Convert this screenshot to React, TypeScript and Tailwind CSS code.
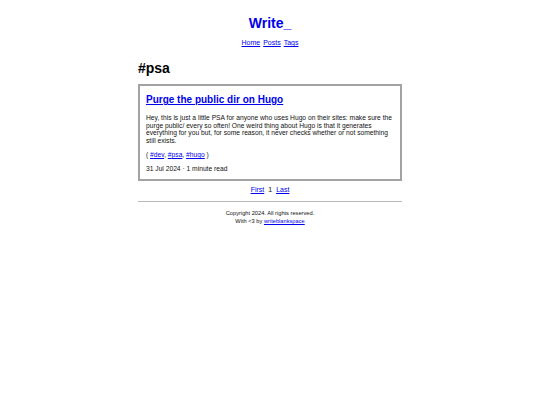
import React from "react";

const tags = ["dev", "psa", "hugo"];

export default function App() {
  return (
    <div className="min-h-[405px] bg-white text-[#111] font-['Liberation_Sans',Arial,sans-serif]">
      <div className="mx-auto w-[264px] pt-[11px]">
        <header className="text-center">
          <a href="#" className="text-[14px] font-bold leading-[20px] text-[#0000ee] no-underline">
            Write_
          </a>
          <nav className="mt-[3px] flex justify-center gap-[3px] text-[7px] leading-[10px]">
            <a href="#" className="text-[#0000ee] underline">Home</a>
            <a href="#" className="text-[#0000ee] underline">Posts</a>
            <a href="#" className="text-[#0000ee] underline">Tags</a>
          </nav>
        </header>

        <h1 className="mt-[11px] text-[14px] font-bold leading-[18px] text-black">#psa</h1>

        <article className="mt-[7px] border-2 border-[#a3a3a3] px-[6px] pt-[6px] pb-[6px]">
          <h2 className="text-[10px] font-bold leading-[16px]">
            <a href="#" className="text-[#0000ee] underline">Purge the public dir on Hugo</a>
          </h2>
          <p className="mt-[6px] text-[6.7px] leading-[7.6px]">
            Hey, this is just a little PSA for anyone who uses Hugo on their sites: make sure the
            purge public/ every so often! One weird thing about Hugo is that it generates
            everything for you but, for some reason, it never checks whether or not something
            still exists.
          </p>
          <p className="mt-[7px] text-[6.7px] leading-[8px]">
            ({" "}
            {tags.map((t, i) => (
              <React.Fragment key={t}>
                <a href="#" className="text-[#0000ee] underline">#{t}</a>
                {i < tags.length - 1 ? ", " : " "}
              </React.Fragment>
            ))}
            )
          </p>
          <p className="mt-[6px] text-[6.7px] leading-[8px]">31 Jul 2024 · 1 minute read</p>
        </article>

        <div className="mt-[4px] flex justify-center gap-[4px] text-[7px] leading-[10px]">
          <a href="#" className="text-[#0000ee] underline">First</a>
          <span>1</span>
          <a href="#" className="text-[#0000ee] underline">Last</a>
        </div>

        <hr className="mt-[6px] border-t border-[#b8b8b8]" />

        <footer className="mt-[7px] text-center text-[5.7px] leading-[8px]">
          <p>Copyright 2024. All rights reserved.</p>
          <p>
            With &lt;3 by <a href="#" className="text-[#0000ee] underline">writeblankspace</a>
          </p>
        </footer>
      </div>
    </div>
  );
}
